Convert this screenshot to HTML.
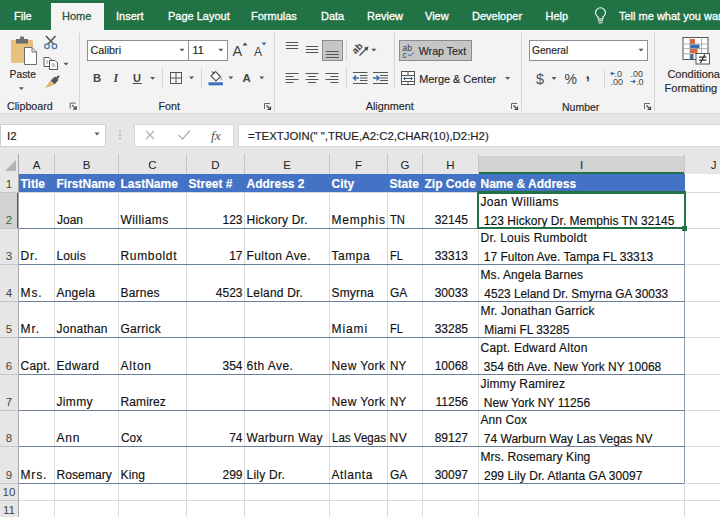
<!DOCTYPE html>
<html><head><meta charset="utf-8"><style>
html,body{margin:0;padding:0;}
.t{-webkit-text-stroke:0.15px currentColor;}
body{width:720px;height:517px;overflow:hidden;position:relative;background:#fff;font-family:'Liberation Sans', sans-serif;}
</style></head><body>
<div style="position:absolute;left:0px;top:0px;width:720px;height:30px;background:#217346"></div><div style="position:absolute;left:51px;top:3px;width:53px;height:27px;background:#f3f3f3"></div><div class="t" style="position:absolute;left:14px;top:10.89px;font-size:11px;line-height:11px;white-space:pre;color:#fff;font-weight:normal;-webkit-text-stroke:0.3px currentColor">File</div><div class="t" style="position:absolute;left:62px;top:10.89px;font-size:11px;line-height:11px;white-space:pre;color:#2b5a3c;font-weight:normal;-webkit-text-stroke:0.3px currentColor">Home</div><div class="t" style="position:absolute;left:116px;top:10.89px;font-size:11px;line-height:11px;white-space:pre;color:#fff;font-weight:normal;-webkit-text-stroke:0.3px currentColor">Insert</div><div class="t" style="position:absolute;left:168px;top:10.89px;font-size:11px;line-height:11px;white-space:pre;color:#fff;font-weight:normal;-webkit-text-stroke:0.3px currentColor">Page Layout</div><div class="t" style="position:absolute;left:251px;top:10.89px;font-size:11px;line-height:11px;white-space:pre;color:#fff;font-weight:normal;-webkit-text-stroke:0.3px currentColor">Formulas</div><div class="t" style="position:absolute;left:321px;top:10.89px;font-size:11px;line-height:11px;white-space:pre;color:#fff;font-weight:normal;-webkit-text-stroke:0.3px currentColor">Data</div><div class="t" style="position:absolute;left:367px;top:10.89px;font-size:11px;line-height:11px;white-space:pre;color:#fff;font-weight:normal;-webkit-text-stroke:0.3px currentColor">Review</div><div class="t" style="position:absolute;left:425px;top:10.89px;font-size:11px;line-height:11px;white-space:pre;color:#fff;font-weight:normal;-webkit-text-stroke:0.3px currentColor">View</div><div class="t" style="position:absolute;left:472px;top:10.89px;font-size:11px;line-height:11px;white-space:pre;color:#fff;font-weight:normal;-webkit-text-stroke:0.3px currentColor">Developer</div><div class="t" style="position:absolute;left:545.5px;top:10.89px;font-size:11px;line-height:11px;white-space:pre;color:#fff;font-weight:normal;-webkit-text-stroke:0.3px currentColor">Help</div><div class="t" style="position:absolute;left:619px;top:10.89px;font-size:11px;line-height:11px;white-space:pre;color:#fff;font-weight:normal;-webkit-text-stroke:0.3px currentColor">Tell me what you want to do</div><div style="position:absolute;left:0px;top:30px;width:720px;height:83px;background:#f3f3f3"></div><div style="position:absolute;left:0px;top:30px;width:51px;height:1px;background:#fbfbfb"></div><div style="position:absolute;left:104px;top:30px;width:616px;height:1px;background:#fbfbfb"></div><div class="t" style="position:absolute;left:9.6px;top:70.08px;font-size:10.3px;line-height:10.3px;white-space:pre;color:#262626;font-weight:normal;">Paste</div><div class="t" style="position:absolute;left:7px;top:101.44px;font-size:10.7px;line-height:10.7px;white-space:pre;color:#262626;font-weight:normal;">Clipboard</div><div class="t" style="position:absolute;left:158.6px;top:101.44px;font-size:10.7px;line-height:10.7px;white-space:pre;color:#262626;font-weight:normal;">Font</div><div class="t" style="position:absolute;left:365.7px;top:101.36px;font-size:10.8px;line-height:10.8px;white-space:pre;color:#262626;font-weight:normal;">Alignment</div><div class="t" style="position:absolute;left:562px;top:101.91px;font-size:10.5px;line-height:10.5px;white-space:pre;color:#262626;font-weight:normal;">Number</div><div style="position:absolute;left:87px;top:40px;width:102px;height:21px;background:#fff;border:1px solid #8f8f8f;box-sizing:border-box"></div><div style="position:absolute;left:188px;top:40px;width:40px;height:21px;background:#fff;border:1px solid #8f8f8f;box-sizing:border-box"></div><div class="t" style="position:absolute;left:90.5px;top:45.26px;font-size:10.8px;line-height:10.8px;white-space:pre;color:#262626;font-weight:normal;">Calibri</div><div class="t" style="position:absolute;left:192.5px;top:45.26px;font-size:10.8px;line-height:10.8px;white-space:pre;color:#262626;font-weight:normal;">11</div><div style="position:absolute;left:529px;top:40px;width:119px;height:21px;background:#fff;border:1px solid #8f8f8f;box-sizing:border-box"></div><div class="t" style="position:absolute;left:532px;top:46.47px;font-size:10.2px;line-height:10.2px;white-space:pre;color:#262626;font-weight:normal;">General</div><div style="position:absolute;left:399px;top:40px;width:73px;height:21px;background:#c6c6c6;border:1px solid #8c8c8c;box-sizing:border-box"></div><div style="position:absolute;left:322px;top:40px;width:21px;height:21px;background:#c6c6c6;border:1px solid #8c8c8c;box-sizing:border-box"></div><div class="t" style="position:absolute;left:418.8px;top:46.43px;font-size:10.6px;line-height:10.6px;white-space:pre;color:#262626;font-weight:normal;">Wrap Text</div><div class="t" style="position:absolute;left:419.2px;top:74.17px;font-size:10.9px;line-height:10.9px;white-space:pre;color:#262626;font-weight:normal;">Merge &amp; Center</div><div class="t" style="position:absolute;left:667.4px;top:69.09px;font-size:11px;line-height:11px;white-space:pre;color:#262626;font-weight:normal;">Conditional</div><div class="t" style="position:absolute;left:664.6px;top:82.69px;font-size:11px;line-height:11px;white-space:pre;color:#262626;font-weight:normal;">Formatting</div><svg width="720" height="30" style="position:absolute;left:0;top:0"><path d="M598.2 19 L598.2 17.3 Q595.5 15.3 595.5 12.8 A5 5 0 0 1 605.5 12.8 Q605.5 15.3 602.8 17.3 L602.8 19 Z" fill="none" stroke="#fff" stroke-width="1.1"/><path d="M598 20.8 L603 20.8 M598.5 22.8 L602.5 22.8" stroke="#fff" stroke-width="1"/></svg><div style="position:absolute;left:0px;top:113px;width:720px;height:61px;background:#e6e6e6"></div><div style="position:absolute;left:0px;top:113px;width:720px;height:1px;background:#d8d8d8"></div><div style="position:absolute;left:0px;top:124px;width:106px;height:23px;background:#fff;border:1px solid #d0d0d0;box-sizing:border-box"></div><div class="t" style="position:absolute;left:7px;top:130.77px;font-size:11.5px;line-height:11.5px;white-space:pre;color:#222;font-weight:normal;">I2</div><div style="position:absolute;left:134px;top:124px;width:100px;height:23px;background:#fff;border:1px solid #d8d8d8;box-sizing:border-box"></div><div style="position:absolute;left:238px;top:124px;width:484px;height:23px;background:#fff;border:1px solid #d8d8d8;box-sizing:border-box"></div><div class="t" style="position:absolute;left:248px;top:131.25px;font-size:11.4px;line-height:11.4px;white-space:pre;color:#222;font-weight:normal;">=TEXTJOIN(" ",TRUE,A2:C2,CHAR(10),D2:H2)</div><div style="position:absolute;left:0px;top:174px;width:720px;height:343px;background:#fff"></div><div style="position:absolute;left:0px;top:174px;width:18px;height:343px;background:#e6e6e6"></div><div style="position:absolute;left:479px;top:156px;width:206px;height:16px;background:#d2d2d2"></div><div style="position:absolute;left:479px;top:172px;width:206px;height:2px;background:#217346"></div><div style="position:absolute;left:0px;top:193px;width:17px;height:35px;background:#d2d2d2"></div><div style="position:absolute;left:17px;top:193px;width:2px;height:35px;background:#217346"></div><svg width="20" height="20" style="position:absolute;left:0;top:152px"><path d="M16 8 L16 19 L5 19 Z" fill="#b4b4b4"/></svg><div style="position:absolute;left:18px;top:154px;width:1px;height:20px;background:#c6c6c6"></div><div style="position:absolute;left:54px;top:154px;width:1px;height:20px;background:#c6c6c6"></div><div style="position:absolute;left:118px;top:154px;width:1px;height:20px;background:#c6c6c6"></div><div style="position:absolute;left:186px;top:154px;width:1px;height:20px;background:#c6c6c6"></div><div style="position:absolute;left:244px;top:154px;width:1px;height:20px;background:#c6c6c6"></div><div style="position:absolute;left:329px;top:154px;width:1px;height:20px;background:#c6c6c6"></div><div style="position:absolute;left:387px;top:154px;width:1px;height:20px;background:#c6c6c6"></div><div style="position:absolute;left:422px;top:154px;width:1px;height:20px;background:#c6c6c6"></div><div style="position:absolute;left:478px;top:154px;width:1px;height:20px;background:#c6c6c6"></div><div style="position:absolute;left:684px;top:154px;width:1px;height:20px;background:#c6c6c6"></div><div style="position:absolute;left:54px;top:174px;width:1px;height:343px;background:#dadada"></div><div style="position:absolute;left:118px;top:174px;width:1px;height:343px;background:#dadada"></div><div style="position:absolute;left:186px;top:174px;width:1px;height:343px;background:#dadada"></div><div style="position:absolute;left:244px;top:174px;width:1px;height:343px;background:#dadada"></div><div style="position:absolute;left:329px;top:174px;width:1px;height:343px;background:#dadada"></div><div style="position:absolute;left:387px;top:174px;width:1px;height:343px;background:#dadada"></div><div style="position:absolute;left:422px;top:174px;width:1px;height:343px;background:#dadada"></div><div style="position:absolute;left:478px;top:174px;width:1px;height:343px;background:#dadada"></div><div style="position:absolute;left:684px;top:174px;width:1px;height:343px;background:#dadada"></div><div style="position:absolute;left:18px;top:154px;width:1px;height:363px;background:#a8a8a8"></div><div style="position:absolute;left:19px;top:192px;width:701px;height:1px;background:#dadada"></div><div style="position:absolute;left:0px;top:192px;width:18px;height:1px;background:#c6c6c6"></div><div style="position:absolute;left:19px;top:228px;width:701px;height:1px;background:#dadada"></div><div style="position:absolute;left:0px;top:228px;width:18px;height:1px;background:#c6c6c6"></div><div style="position:absolute;left:19px;top:264px;width:701px;height:1px;background:#dadada"></div><div style="position:absolute;left:0px;top:264px;width:18px;height:1px;background:#c6c6c6"></div><div style="position:absolute;left:19px;top:301px;width:701px;height:1px;background:#dadada"></div><div style="position:absolute;left:0px;top:301px;width:18px;height:1px;background:#c6c6c6"></div><div style="position:absolute;left:19px;top:337px;width:701px;height:1px;background:#dadada"></div><div style="position:absolute;left:0px;top:337px;width:18px;height:1px;background:#c6c6c6"></div><div style="position:absolute;left:19px;top:374px;width:701px;height:1px;background:#dadada"></div><div style="position:absolute;left:0px;top:374px;width:18px;height:1px;background:#c6c6c6"></div><div style="position:absolute;left:19px;top:410px;width:701px;height:1px;background:#dadada"></div><div style="position:absolute;left:0px;top:410px;width:18px;height:1px;background:#c6c6c6"></div><div style="position:absolute;left:19px;top:446px;width:701px;height:1px;background:#dadada"></div><div style="position:absolute;left:0px;top:446px;width:18px;height:1px;background:#c6c6c6"></div><div style="position:absolute;left:19px;top:483px;width:701px;height:1px;background:#dadada"></div><div style="position:absolute;left:0px;top:483px;width:18px;height:1px;background:#c6c6c6"></div><div style="position:absolute;left:19px;top:500px;width:701px;height:1px;background:#dadada"></div><div style="position:absolute;left:0px;top:500px;width:18px;height:1px;background:#c6c6c6"></div><div style="position:absolute;left:19px;top:518px;width:701px;height:1px;background:#dadada"></div><div style="position:absolute;left:0px;top:518px;width:18px;height:1px;background:#c6c6c6"></div><div style="position:absolute;left:19px;top:174px;width:666px;height:18px;background:#4472c4"></div><div style="position:absolute;left:19px;top:228px;width:665px;height:1px;background:#6b7f9a"></div><div style="position:absolute;left:19px;top:264px;width:665px;height:1px;background:#6b7f9a"></div><div style="position:absolute;left:19px;top:301px;width:665px;height:1px;background:#6b7f9a"></div><div style="position:absolute;left:19px;top:337px;width:665px;height:1px;background:#6b7f9a"></div><div style="position:absolute;left:19px;top:374px;width:665px;height:1px;background:#6b7f9a"></div><div style="position:absolute;left:19px;top:410px;width:665px;height:1px;background:#6b7f9a"></div><div style="position:absolute;left:19px;top:446px;width:665px;height:1px;background:#6b7f9a"></div><div style="position:absolute;left:19px;top:483px;width:665px;height:1px;background:#6b7f9a"></div><div style="position:absolute;left:684px;top:192px;width:1px;height:291px;background:#8c9bb0"></div><div style="position:absolute;left:19px;width:35px;top:160.37px;font-size:11.5px;line-height:11.5px;text-align:center;color:#222">A</div><div style="position:absolute;left:55px;width:63px;top:160.37px;font-size:11.5px;line-height:11.5px;text-align:center;color:#222">B</div><div style="position:absolute;left:119px;width:67px;top:160.37px;font-size:11.5px;line-height:11.5px;text-align:center;color:#222">C</div><div style="position:absolute;left:187px;width:57px;top:160.37px;font-size:11.5px;line-height:11.5px;text-align:center;color:#222">D</div><div style="position:absolute;left:245px;width:84px;top:160.37px;font-size:11.5px;line-height:11.5px;text-align:center;color:#222">E</div><div style="position:absolute;left:330px;width:57px;top:160.37px;font-size:11.5px;line-height:11.5px;text-align:center;color:#222">F</div><div style="position:absolute;left:388px;width:34px;top:160.37px;font-size:11.5px;line-height:11.5px;text-align:center;color:#222">G</div><div style="position:absolute;left:423px;width:55px;top:160.37px;font-size:11.5px;line-height:11.5px;text-align:center;color:#222">H</div><div style="position:absolute;left:479px;width:205px;top:160.37px;font-size:11.5px;line-height:11.5px;text-align:center;color:#222">I</div><div style="position:absolute;left:685px;width:57px;top:160.37px;font-size:11.5px;line-height:11.5px;text-align:center;color:#222">J</div><div style="position:absolute;left:0px;width:18px;top:178.77px;font-size:11.5px;line-height:11.5px;text-align:center;color:#444">1</div><div style="position:absolute;left:0px;width:18px;top:214.77px;font-size:11.5px;line-height:11.5px;text-align:center;color:#2c6a45">2</div><div style="position:absolute;left:0px;width:18px;top:250.77px;font-size:11.5px;line-height:11.5px;text-align:center;color:#444">3</div><div style="position:absolute;left:0px;width:18px;top:287.77px;font-size:11.5px;line-height:11.5px;text-align:center;color:#444">4</div><div style="position:absolute;left:0px;width:18px;top:323.77px;font-size:11.5px;line-height:11.5px;text-align:center;color:#444">5</div><div style="position:absolute;left:0px;width:18px;top:360.77px;font-size:11.5px;line-height:11.5px;text-align:center;color:#444">6</div><div style="position:absolute;left:0px;width:18px;top:396.77px;font-size:11.5px;line-height:11.5px;text-align:center;color:#444">7</div><div style="position:absolute;left:0px;width:18px;top:432.77px;font-size:11.5px;line-height:11.5px;text-align:center;color:#444">8</div><div style="position:absolute;left:0px;width:18px;top:469.77px;font-size:11.5px;line-height:11.5px;text-align:center;color:#444">9</div><div style="position:absolute;left:0px;width:18px;top:486.77px;font-size:11.5px;line-height:11.5px;text-align:center;color:#444">10</div><div style="position:absolute;left:0px;width:18px;top:504.77px;font-size:11.5px;line-height:11.5px;text-align:center;color:#444">11</div><div class="t" style="position:absolute;left:20.5px;top:178.34px;font-size:12px;line-height:12px;white-space:pre;color:#fff;font-weight:bold;">Title</div><div class="t" style="position:absolute;left:56.5px;top:178.34px;font-size:12px;line-height:12px;white-space:pre;color:#fff;font-weight:bold;">FirstName</div><div class="t" style="position:absolute;left:120.5px;top:178.34px;font-size:12px;line-height:12px;white-space:pre;color:#fff;font-weight:bold;">LastName</div><div class="t" style="position:absolute;left:188.5px;top:178.34px;font-size:12px;line-height:12px;white-space:pre;color:#fff;font-weight:bold;">Street #</div><div class="t" style="position:absolute;left:246.5px;top:178.34px;font-size:12px;line-height:12px;white-space:pre;color:#fff;font-weight:bold;">Address 2</div><div class="t" style="position:absolute;left:331.5px;top:178.34px;font-size:12px;line-height:12px;white-space:pre;color:#fff;font-weight:bold;">City</div><div class="t" style="position:absolute;left:389.5px;top:178.34px;font-size:12px;line-height:12px;white-space:pre;color:#fff;font-weight:bold;">State</div><div class="t" style="position:absolute;left:424.5px;top:178.34px;font-size:12px;line-height:12px;white-space:pre;color:#fff;font-weight:bold;">Zip Code</div><div class="t" style="position:absolute;left:480.5px;top:178.34px;font-size:12px;line-height:12px;white-space:pre;color:#fff;font-weight:bold;">Name &amp; Address</div><div class="t" style="position:absolute;left:56.5px;top:214.14px;font-size:12px;line-height:12px;white-space:pre;color:#111;font-weight:normal;transform:scaleX(0.9991);transform-origin:0 0">Joan</div><div class="t" style="position:absolute;left:120.5px;top:214.14px;font-size:12px;line-height:12px;white-space:pre;color:#111;font-weight:normal;letter-spacing:0.440px">Williams</div><div class="t" style="position:absolute;left:186px;width:56.5px;top:214.14px;font-size:12px;line-height:12px;text-align:right;white-space:pre;color:#111">123</div><div class="t" style="position:absolute;left:246.5px;top:214.14px;font-size:12px;line-height:12px;white-space:pre;color:#111;font-weight:normal;letter-spacing:0.233px">Hickory Dr.</div><div class="t" style="position:absolute;left:331.5px;top:214.14px;font-size:12px;line-height:12px;white-space:pre;color:#111;font-weight:normal;letter-spacing:0.803px">Memphis</div><div class="t" style="position:absolute;left:389.5px;top:214.14px;font-size:12px;line-height:12px;white-space:pre;color:#111;font-weight:normal;transform:scaleX(0.9336);transform-origin:0 0">TN</div><div class="t" style="position:absolute;left:422px;width:46px;top:214.14px;font-size:12px;line-height:12px;text-align:right;white-space:pre;color:#111">32145</div><div class="t" style="position:absolute;left:480.5px;top:196.34px;font-size:12px;line-height:12px;white-space:pre;color:#111;font-weight:normal;letter-spacing:0.332px">Joan Williams</div><div class="t" style="position:absolute;left:480.5px;top:214.64px;font-size:12px;line-height:12px;white-space:pre;color:#111;font-weight:normal;letter-spacing:0.024px"> 123 Hickory Dr. Memphis TN 32145</div><div class="t" style="position:absolute;left:20.5px;top:250.14px;font-size:12px;line-height:12px;white-space:pre;color:#111;font-weight:normal;letter-spacing:0.900px">Dr.</div><div class="t" style="position:absolute;left:56.5px;top:250.14px;font-size:12px;line-height:12px;white-space:pre;color:#111;font-weight:normal;letter-spacing:0.112px">Louis</div><div class="t" style="position:absolute;left:120.5px;top:250.14px;font-size:12px;line-height:12px;white-space:pre;color:#111;font-weight:normal;letter-spacing:0.663px">Rumboldt</div><div class="t" style="position:absolute;left:186px;width:56.5px;top:250.14px;font-size:12px;line-height:12px;text-align:right;white-space:pre;color:#111">17</div><div class="t" style="position:absolute;left:246.5px;top:250.14px;font-size:12px;line-height:12px;white-space:pre;color:#111;font-weight:normal;letter-spacing:0.418px">Fulton Ave.</div><div class="t" style="position:absolute;left:331.5px;top:250.14px;font-size:12px;line-height:12px;white-space:pre;color:#111;font-weight:normal;letter-spacing:0.556px">Tampa</div><div class="t" style="position:absolute;left:389.5px;top:250.14px;font-size:12px;line-height:12px;white-space:pre;color:#111;font-weight:normal;transform:scaleX(0.9091);transform-origin:0 0">FL</div><div class="t" style="position:absolute;left:422px;width:46px;top:250.14px;font-size:12px;line-height:12px;text-align:right;white-space:pre;color:#111">33313</div><div class="t" style="position:absolute;left:480.5px;top:232.34px;font-size:12px;line-height:12px;white-space:pre;color:#111;font-weight:normal;letter-spacing:0.250px">Dr. Louis Rumboldt</div><div class="t" style="position:absolute;left:480.5px;top:250.64px;font-size:12px;line-height:12px;white-space:pre;color:#111;font-weight:normal;letter-spacing:0.002px"> 17 Fulton Ave. Tampa FL 33313</div><div class="t" style="position:absolute;left:20.5px;top:287.14px;font-size:12px;line-height:12px;white-space:pre;color:#111;font-weight:normal;letter-spacing:0.900px">Ms.</div><div class="t" style="position:absolute;left:56.5px;top:287.14px;font-size:12px;line-height:12px;white-space:pre;color:#111;font-weight:normal;letter-spacing:0.208px">Angela</div><div class="t" style="position:absolute;left:120.5px;top:287.14px;font-size:12px;line-height:12px;white-space:pre;color:#111;font-weight:normal;letter-spacing:0.196px">Barnes</div><div class="t" style="position:absolute;left:186px;width:56.5px;top:287.14px;font-size:12px;line-height:12px;text-align:right;white-space:pre;color:#111">4523</div><div class="t" style="position:absolute;left:246.5px;top:287.14px;font-size:12px;line-height:12px;white-space:pre;color:#111;font-weight:normal;letter-spacing:0.187px">Leland Dr.</div><div class="t" style="position:absolute;left:331.5px;top:287.14px;font-size:12px;line-height:12px;white-space:pre;color:#111;font-weight:normal;letter-spacing:0.173px">Smyrna</div><div class="t" style="position:absolute;left:389.5px;top:287.14px;font-size:12px;line-height:12px;white-space:pre;color:#111;font-weight:normal;transform:scaleX(0.9961);transform-origin:0 0">GA</div><div class="t" style="position:absolute;left:422px;width:46px;top:287.14px;font-size:12px;line-height:12px;text-align:right;white-space:pre;color:#111">30033</div><div class="t" style="position:absolute;left:480.5px;top:269.34px;font-size:12px;line-height:12px;white-space:pre;color:#111;font-weight:normal;letter-spacing:0.111px">Ms. Angela Barnes</div><div class="t" style="position:absolute;left:480.5px;top:287.64px;font-size:12px;line-height:12px;white-space:pre;color:#111;font-weight:normal;transform:scaleX(0.9874);transform-origin:0 0"> 4523 Leland Dr. Smyrna GA 30033</div><div class="t" style="position:absolute;left:20.5px;top:323.14px;font-size:12px;line-height:12px;white-space:pre;color:#111;font-weight:normal;letter-spacing:0.900px">Mr.</div><div class="t" style="position:absolute;left:56.5px;top:323.14px;font-size:12px;line-height:12px;white-space:pre;color:#111;font-weight:normal;letter-spacing:0.232px">Jonathan</div><div class="t" style="position:absolute;left:120.5px;top:323.14px;font-size:12px;line-height:12px;white-space:pre;color:#111;font-weight:normal;letter-spacing:0.257px">Garrick</div><div class="t" style="position:absolute;left:331.5px;top:323.14px;font-size:12px;line-height:12px;white-space:pre;color:#111;font-weight:normal;letter-spacing:0.900px">Miami</div><div class="t" style="position:absolute;left:389.5px;top:323.14px;font-size:12px;line-height:12px;white-space:pre;color:#111;font-weight:normal;transform:scaleX(0.9091);transform-origin:0 0">FL</div><div class="t" style="position:absolute;left:422px;width:46px;top:323.14px;font-size:12px;line-height:12px;text-align:right;white-space:pre;color:#111">33285</div><div class="t" style="position:absolute;left:480.5px;top:305.34px;font-size:12px;line-height:12px;white-space:pre;color:#111;font-weight:normal;letter-spacing:0.138px">Mr. Jonathan Garrick</div><div class="t" style="position:absolute;left:480.5px;top:323.64px;font-size:12px;line-height:12px;white-space:pre;color:#111;font-weight:normal;transform:scaleX(0.9930);transform-origin:0 0"> Miami FL 33285</div><div class="t" style="position:absolute;left:20.5px;top:360.14px;font-size:12px;line-height:12px;white-space:pre;color:#111;font-weight:normal;letter-spacing:0.221px">Capt.</div><div class="t" style="position:absolute;left:56.5px;top:360.14px;font-size:12px;line-height:12px;white-space:pre;color:#111;font-weight:normal;letter-spacing:0.350px">Edward</div><div class="t" style="position:absolute;left:120.5px;top:360.14px;font-size:12px;line-height:12px;white-space:pre;color:#111;font-weight:normal;letter-spacing:0.793px">Alton</div><div class="t" style="position:absolute;left:186px;width:56.5px;top:360.14px;font-size:12px;line-height:12px;text-align:right;white-space:pre;color:#111">354</div><div class="t" style="position:absolute;left:246.5px;top:360.14px;font-size:12px;line-height:12px;white-space:pre;color:#111;font-weight:normal;letter-spacing:0.462px">6th Ave.</div><div class="t" style="position:absolute;left:331.5px;top:360.14px;font-size:12px;line-height:12px;white-space:pre;color:#111;font-weight:normal;letter-spacing:0.400px">New York</div><div class="t" style="position:absolute;left:389.5px;top:360.14px;font-size:12px;line-height:12px;white-space:pre;color:#111;font-weight:normal;transform:scaleX(0.9725);transform-origin:0 0">NY</div><div class="t" style="position:absolute;left:422px;width:46px;top:360.14px;font-size:12px;line-height:12px;text-align:right;white-space:pre;color:#111">10068</div><div class="t" style="position:absolute;left:480.5px;top:342.34px;font-size:12px;line-height:12px;white-space:pre;color:#111;font-weight:normal;letter-spacing:0.240px">Capt. Edward Alton</div><div class="t" style="position:absolute;left:480.5px;top:360.64px;font-size:12px;line-height:12px;white-space:pre;color:#111;font-weight:normal;letter-spacing:0.013px"> 354 6th Ave. New York NY 10068</div><div class="t" style="position:absolute;left:56.5px;top:396.14px;font-size:12px;line-height:12px;white-space:pre;color:#111;font-weight:normal;letter-spacing:0.325px">Jimmy</div><div class="t" style="position:absolute;left:120.5px;top:396.14px;font-size:12px;line-height:12px;white-space:pre;color:#111;font-weight:normal;letter-spacing:0.101px">Ramirez</div><div class="t" style="position:absolute;left:331.5px;top:396.14px;font-size:12px;line-height:12px;white-space:pre;color:#111;font-weight:normal;letter-spacing:0.400px">New York</div><div class="t" style="position:absolute;left:389.5px;top:396.14px;font-size:12px;line-height:12px;white-space:pre;color:#111;font-weight:normal;transform:scaleX(0.9725);transform-origin:0 0">NY</div><div class="t" style="position:absolute;left:422px;width:46px;top:396.14px;font-size:12px;line-height:12px;text-align:right;white-space:pre;color:#111">11256</div><div class="t" style="position:absolute;left:480.5px;top:378.34px;font-size:12px;line-height:12px;white-space:pre;color:#111;font-weight:normal;letter-spacing:0.145px">Jimmy Ramirez</div><div class="t" style="position:absolute;left:480.5px;top:396.64px;font-size:12px;line-height:12px;white-space:pre;color:#111;font-weight:normal;letter-spacing:0.000px"> New York NY 11256</div><div class="t" style="position:absolute;left:56.5px;top:432.14px;font-size:12px;line-height:12px;white-space:pre;color:#111;font-weight:normal;letter-spacing:0.779px">Ann</div><div class="t" style="position:absolute;left:120.5px;top:432.14px;font-size:12px;line-height:12px;white-space:pre;color:#111;font-weight:normal;transform:scaleX(0.9873);transform-origin:0 0">Cox</div><div class="t" style="position:absolute;left:186px;width:56.5px;top:432.14px;font-size:12px;line-height:12px;text-align:right;white-space:pre;color:#111">74</div><div class="t" style="position:absolute;left:246.5px;top:432.14px;font-size:12px;line-height:12px;white-space:pre;color:#111;font-weight:normal;letter-spacing:0.354px">Warburn Way</div><div class="t" style="position:absolute;left:331.5px;top:432.14px;font-size:12px;line-height:12px;white-space:pre;color:#111;font-weight:normal;transform:scaleX(0.9628);transform-origin:0 0">Las Vegas</div><div class="t" style="position:absolute;left:389.5px;top:432.14px;font-size:12px;line-height:12px;white-space:pre;color:#111;font-weight:normal;letter-spacing:0.645px">NV</div><div class="t" style="position:absolute;left:422px;width:46px;top:432.14px;font-size:12px;line-height:12px;text-align:right;white-space:pre;color:#111">89127</div><div class="t" style="position:absolute;left:480.5px;top:414.34px;font-size:12px;line-height:12px;white-space:pre;color:#111;font-weight:normal;letter-spacing:0.079px">Ann Cox</div><div class="t" style="position:absolute;left:480.5px;top:432.64px;font-size:12px;line-height:12px;white-space:pre;color:#111;font-weight:normal;letter-spacing:0.007px"> 74 Warburn Way Las Vegas NV</div><div class="t" style="position:absolute;left:20.5px;top:469.14px;font-size:12px;line-height:12px;white-space:pre;color:#111;font-weight:normal;letter-spacing:0.839px">Mrs.</div><div class="t" style="position:absolute;left:56.5px;top:469.14px;font-size:12px;line-height:12px;white-space:pre;color:#111;font-weight:normal;letter-spacing:0.092px">Rosemary</div><div class="t" style="position:absolute;left:120.5px;top:469.14px;font-size:12px;line-height:12px;white-space:pre;color:#111;font-weight:normal;letter-spacing:0.151px">King</div><div class="t" style="position:absolute;left:186px;width:56.5px;top:469.14px;font-size:12px;line-height:12px;text-align:right;white-space:pre;color:#111">299</div><div class="t" style="position:absolute;left:246.5px;top:469.14px;font-size:12px;line-height:12px;white-space:pre;color:#111;font-weight:normal;letter-spacing:0.232px">Lily Dr.</div><div class="t" style="position:absolute;left:331.5px;top:469.14px;font-size:12px;line-height:12px;white-space:pre;color:#111;font-weight:normal;letter-spacing:0.578px">Atlanta</div><div class="t" style="position:absolute;left:389.5px;top:469.14px;font-size:12px;line-height:12px;white-space:pre;color:#111;font-weight:normal;transform:scaleX(0.9961);transform-origin:0 0">GA</div><div class="t" style="position:absolute;left:422px;width:46px;top:469.14px;font-size:12px;line-height:12px;text-align:right;white-space:pre;color:#111">30097</div><div class="t" style="position:absolute;left:480.5px;top:451.34px;font-size:12px;line-height:12px;white-space:pre;color:#111;font-weight:normal;letter-spacing:0.065px">Mrs. Rosemary King</div><div class="t" style="position:absolute;left:480.5px;top:469.64px;font-size:12px;line-height:12px;white-space:pre;color:#111;font-weight:normal;letter-spacing:0.062px"> 299 Lily Dr. Atlanta GA 30097</div><div style="position:absolute;left:477px;top:191px;width:209px;height:3px;background:#217346"></div><div style="position:absolute;left:477px;top:227px;width:209px;height:2px;background:#217346"></div><div style="position:absolute;left:477px;top:191px;width:2px;height:38px;background:#217346"></div><div style="position:absolute;left:684px;top:191px;width:2px;height:38px;background:#217346"></div><div style="position:absolute;left:682px;top:226px;width:5px;height:5px;background:#217346"></div><svg width="720" height="517" style="position:absolute;left:0;top:0"><line x1="79.5" y1="33" x2="79.5" y2="111" stroke="#d4d4d4" stroke-width="1"/><line x1="274.5" y1="33" x2="274.5" y2="111" stroke="#d4d4d4" stroke-width="1"/><line x1="521.5" y1="33" x2="521.5" y2="111" stroke="#d4d4d4" stroke-width="1"/><line x1="654.5" y1="33" x2="654.5" y2="111" stroke="#d4d4d4" stroke-width="1"/><line x1="162.5" y1="68" x2="162.5" y2="88" stroke="#d4d4d4" stroke-width="1"/><line x1="201.5" y1="68" x2="201.5" y2="88" stroke="#d4d4d4" stroke-width="1"/><line x1="346.5" y1="40" x2="346.5" y2="61" stroke="#d4d4d4" stroke-width="1"/><line x1="346.5" y1="67" x2="346.5" y2="88" stroke="#d4d4d4" stroke-width="1"/><line x1="394.5" y1="33" x2="394.5" y2="88" stroke="#d4d4d4" stroke-width="1"/><line x1="604.5" y1="69" x2="604.5" y2="88" stroke="#d4d4d4" stroke-width="1"/><path d="M18.8 87.3 L23.8 87.3 L21.3 90.1 Z" fill="#555"/><path d="M63.5 62.7 L68.5 62.7 L66 65.5 Z" fill="#555"/><path d="M179.5 48.7 L184.5 48.7 L182 51.5 Z" fill="#555"/><path d="M218.3 48.7 L223.3 48.7 L220.8 51.5 Z" fill="#555"/><path d="M150.1 76.9 L155.1 76.9 L152.6 79.7 Z" fill="#555"/><path d="M189.0 76.5 L194.0 76.5 L191.5 79.3 Z" fill="#555"/><path d="M228.3 76.5 L233.3 76.5 L230.8 79.3 Z" fill="#555"/><path d="M259.3 76.5 L264.3 76.5 L261.8 79.3 Z" fill="#555"/><path d="M371.3 48.7 L376.3 48.7 L373.8 51.5 Z" fill="#555"/><path d="M505.2 76.9 L510.2 76.9 L507.7 79.7 Z" fill="#555"/><path d="M638.5 48.7 L643.5 48.7 L641 51.5 Z" fill="#555"/><path d="M551.5 77.10000000000001 L556.5 77.10000000000001 L554 79.9 Z" fill="#555"/><path d="M70.2 108.6 L70.2 103.1 L75.7 103.1" stroke="#666" stroke-width="1" fill="none"/><path d="M72.2 105.1 L76.2 109.1 M73.2 109.1 L76.2 109.1 L76.2 106.1" stroke="#444" stroke-width="1.2" fill="none"/><path d="M264.5 109 L264.5 103.5 L270 103.5" stroke="#666" stroke-width="1" fill="none"/><path d="M266.5 105.5 L270.5 109.5 M267.5 109.5 L270.5 109.5 L270.5 106.5" stroke="#444" stroke-width="1.2" fill="none"/><path d="M511.5 109 L511.5 103.5 L517 103.5" stroke="#666" stroke-width="1" fill="none"/><path d="M513.5 105.5 L517.5 109.5 M514.5 109.5 L517.5 109.5 L517.5 106.5" stroke="#444" stroke-width="1.2" fill="none"/><path d="M644.5 109 L644.5 103.5 L650 103.5" stroke="#666" stroke-width="1" fill="none"/><path d="M646.5 105.5 L650.5 109.5 M647.5 109.5 L650.5 109.5 L650.5 106.5" stroke="#444" stroke-width="1.2" fill="none"/><rect x="11" y="40" width="22" height="23" rx="1" fill="#e8c17a"/><rect x="16" y="39" width="12" height="4.5" fill="#6d6d6d"/><rect x="20" y="36.5" width="4" height="3" rx="1" fill="#6d6d6d"/><path d="M24.5 47.5 L32 47.5 L36.5 52 L36.5 64.5 L24.5 64.5 Z" fill="#fff" stroke="#6d6d6d" stroke-width="1"/><path d="M32 47.5 L32 52 L36.5 52" fill="none" stroke="#6d6d6d" stroke-width="1"/><path d="M46 36 L54 44.5 M55.5 36 L47.5 44.5" stroke="#555" stroke-width="1.6" fill="none"/><circle cx="47" cy="46.3" r="2.3" fill="none" stroke="#5b7fa8" stroke-width="1.4"/><circle cx="54.5" cy="46.3" r="2.3" fill="none" stroke="#5b7fa8" stroke-width="1.4"/><path d="M44 57.5 L49 57.5 L51 59.5 L51 66.5 L44 66.5 Z" fill="#fff" stroke="#555" stroke-width="1"/><path d="M49.5 60.5 L55 60.5 L57.5 63 L57.5 69.5 L49.5 69.5 Z" fill="#fff" stroke="#555" stroke-width="1"/><path d="M51.5 64 L55 64 M51.5 66 L55.5 66 M46 61 L48 61 M46 63 L48 63" stroke="#777" stroke-width="0.8"/><path d="M45 88 L50 81 L54 85 Z" fill="#e6b46a"/><path d="M50.5 80.5 L54.5 84.5 L58.5 80 L55 76.5 Z" fill="#555"/><path d="M56 79 L59 76" stroke="#555" stroke-width="2.2"/><text x="232.5" y="55.8" font-family="Liberation Sans" font-size="14.5" fill="#444">A</text><path d="M242.5 45.5 L245 42.5 L247.5 45.5 Z" fill="#444"/><text x="254" y="55.8" font-family="Liberation Sans" font-size="12" fill="#444">A</text><path d="M261.5 42.5 L266.5 42.5 L264 45.5 Z" fill="#3a6db0"/><text x="93" y="81.8" font-family="Liberation Sans" font-weight="bold" font-size="11.2" fill="#444">B</text><text x="113.5" y="81.8" font-family="Liberation Serif" font-style="italic" font-weight="bold" font-size="12" fill="#444">I</text><text x="133" y="81.8" font-family="Liberation Sans" font-weight="bold" font-size="11" fill="#444">U</text><line x1="132.7" y1="83.5" x2="141.6" y2="83.5" stroke="#444" stroke-width="1"/><rect x="170.5" y="72.5" width="11" height="11" fill="none" stroke="#555" stroke-width="1"/><path d="M176 72.5 L176 83.5 M170.5 78 L181.5 78" stroke="#555" stroke-width="1"/><path d="M211 76 L215.5 71.5 L220.5 76.5 L216 81 Z" fill="#fff" stroke="#555" stroke-width="1.2"/><path d="M212 71.5 L214.5 74" stroke="#555" stroke-width="1.2"/><path d="M221 77 Q222.5 79.5 221.5 80.5 Q220 79.5 221 77Z" fill="#3c70b5"/><rect x="208.5" y="82.3" width="14.5" height="3" fill="#3c6fc0"/><text x="242.5" y="81.8" font-family="Liberation Sans" font-weight="bold" font-size="11.5" fill="#444">A</text><line x1="285.8" y1="42.5" x2="298.3" y2="42.5" stroke="#555" stroke-width="1"/><line x1="285.8" y1="45.5" x2="298.3" y2="45.5" stroke="#555" stroke-width="1"/><line x1="285.8" y1="48.5" x2="298.3" y2="48.5" stroke="#555" stroke-width="1"/><line x1="305.8" y1="46.5" x2="318.3" y2="46.5" stroke="#555" stroke-width="1"/><line x1="305.8" y1="49.5" x2="318.3" y2="49.5" stroke="#555" stroke-width="1"/><line x1="305.8" y1="52.5" x2="318.3" y2="52.5" stroke="#555" stroke-width="1"/><line x1="325.8" y1="51.5" x2="338.8" y2="51.5" stroke="#555" stroke-width="1"/><line x1="325.8" y1="54.5" x2="338.8" y2="54.5" stroke="#555" stroke-width="1"/><line x1="325.8" y1="57.5" x2="338.8" y2="57.5" stroke="#555" stroke-width="1"/><line x1="285.5" y1="73.5" x2="298.5" y2="73.5" stroke="#555" stroke-width="1"/><line x1="285.5" y1="76.5" x2="293.5" y2="76.5" stroke="#555" stroke-width="1"/><line x1="285.5" y1="79.5" x2="298.5" y2="79.5" stroke="#555" stroke-width="1"/><line x1="285.5" y1="82.5" x2="293.5" y2="82.5" stroke="#555" stroke-width="1"/><line x1="305.5" y1="73.5" x2="318.5" y2="73.5" stroke="#555" stroke-width="1"/><line x1="308" y1="76.5" x2="316" y2="76.5" stroke="#555" stroke-width="1"/><line x1="305.5" y1="79.5" x2="318.5" y2="79.5" stroke="#555" stroke-width="1"/><line x1="308" y1="82.5" x2="316" y2="82.5" stroke="#555" stroke-width="1"/><line x1="325.5" y1="73.5" x2="338.5" y2="73.5" stroke="#555" stroke-width="1"/><line x1="330.5" y1="76.5" x2="338.5" y2="76.5" stroke="#555" stroke-width="1"/><line x1="325.5" y1="79.5" x2="338.5" y2="79.5" stroke="#555" stroke-width="1"/><line x1="330.5" y1="82.5" x2="338.5" y2="82.5" stroke="#555" stroke-width="1"/><line x1="353" y1="72.5" x2="367.5" y2="72.5" stroke="#555" stroke-width="1"/><line x1="353" y1="83.5" x2="367.5" y2="83.5" stroke="#555" stroke-width="1"/><line x1="360" y1="75.5" x2="367.5" y2="75.5" stroke="#555" stroke-width="1"/><line x1="360" y1="78" x2="367.5" y2="78" stroke="#555" stroke-width="1"/><line x1="360" y1="80.5" x2="367.5" y2="80.5" stroke="#555" stroke-width="1"/><path d="M353.5 78 L359 78 M356 75.5 L353.5 78 L356 80.5" stroke="#3a6db0" stroke-width="1.5" fill="none"/><line x1="373" y1="72.5" x2="388" y2="72.5" stroke="#555" stroke-width="1"/><line x1="373" y1="83.5" x2="388" y2="83.5" stroke="#555" stroke-width="1"/><line x1="380" y1="75.5" x2="388" y2="75.5" stroke="#555" stroke-width="1"/><line x1="380" y1="78" x2="388" y2="78" stroke="#555" stroke-width="1"/><line x1="380" y1="80.5" x2="388" y2="80.5" stroke="#555" stroke-width="1"/><path d="M373 78 L379 78 M376.5 75.5 L379 78 L376.5 80.5" stroke="#3a6db0" stroke-width="1.5" fill="none"/><text x="0" y="0" transform="translate(355.5 54.5) rotate(-45)" font-family="Liberation Sans" font-weight="bold" font-size="9.5" fill="#444">ab</text><path d="M359.5 55.5 L366 49" stroke="#444" stroke-width="1.2" fill="none"/><path d="M368.5 46.5 L367.3 51 L364 47.7 Z" fill="#444"/><text x="402.5" y="50.5" font-family="Liberation Sans" font-size="8.5" fill="#444">ab</text><text x="402.5" y="57.5" font-family="Liberation Sans" font-size="8.5" fill="#444">c</text><path d="M408 54.5 L410 56 L414 52.5" stroke="#3a6db0" stroke-width="1" fill="none"/><rect x="401.5" y="71.5" width="13" height="13" fill="#fff" stroke="#555" stroke-width="1"/><path d="M401.5 75.5 L414.5 75.5 M401.5 81.5 L414.5 81.5 M408 71.5 L408 75.5 M408 81.5 L408 84.5" stroke="#555" stroke-width="1" fill="none"/><path d="M403.5 78.5 L412.5 78.5 M405.5 76.8 L403.5 78.5 L405.5 80.2 M410.5 76.8 L412.5 78.5 L410.5 80.2" stroke="#3d5a80" stroke-width="1" fill="none"/><text x="536" y="84" font-family="Liberation Sans" font-size="14.5" fill="#505050">$</text><text x="564.5" y="84" font-family="Liberation Sans" font-size="14" fill="#444">%</text><text x="585.5" y="79" font-family="Liberation Sans" font-weight="bold" font-size="16" fill="#444">,</text><text x="614.5" y="76.5" font-family="Liberation Sans" font-size="9" fill="#444">.0</text><text x="610.5" y="85" font-family="Liberation Sans" font-size="9" fill="#444">.00</text><path d="M611 73.5 L615 73.5 M612.5 72 L611 73.5 L612.5 75" stroke="#3a6db0" stroke-width="1.2" fill="none"/><text x="630.5" y="76.5" font-family="Liberation Sans" font-size="9" fill="#444">.00</text><text x="636" y="85" font-family="Liberation Sans" font-size="9" fill="#444">.0</text><path d="M630.5 81.5 L635 81.5 M633.5 80 L635 81.5 L633.5 83" stroke="#3a6db0" stroke-width="1.2" fill="none"/><rect x="683" y="37.5" width="25" height="22" fill="#fff" stroke="#555" stroke-width="1"/><rect x="690" y="39" width="5" height="5" fill="#e0603a"/><rect x="690" y="44.5" width="9.5" height="4" fill="#3a6db0"/><rect x="690" y="49" width="7.5" height="4" fill="#e0603a"/><rect x="690" y="54" width="3.5" height="5" fill="#3a6db0"/><path d="M690 37.5 L690 59.5 M701.5 37.5 L701.5 59.5 M683 44 L708 44 M683 48.7 L708 48.7 M683 53.8 L708 53.8" stroke="#999" stroke-width="0.8"/><rect x="696" y="53.5" width="13.5" height="10.5" fill="#fff" stroke="#555" stroke-width="1"/><path d="M699 57.2 L706.5 57.2 M699 60.2 L706.5 60.2 M704.8 54.5 L700.5 63" stroke="#333" stroke-width="1.3" fill="none"/><path d="M94.5 132.5 L99.5 132.5 L97 135.5 Z" fill="#555"/><circle cx="120" cy="131.5" r="0.8" fill="#999"/><circle cx="120" cy="135" r="0.8" fill="#999"/><circle cx="120" cy="138.5" r="0.8" fill="#999"/><path d="M146 131 L154 139 M154 131 L146 139" stroke="#b0b0b0" stroke-width="1.2"/><path d="M178.5 135 L182.5 139 L190 130.5" stroke="#b0b0b0" stroke-width="1.3" fill="none"/><text x="211" y="140" font-family="Liberation Serif" font-style="italic" font-size="13.5" fill="#555">fx</text></svg><div id="end"></div>
</body></html>
